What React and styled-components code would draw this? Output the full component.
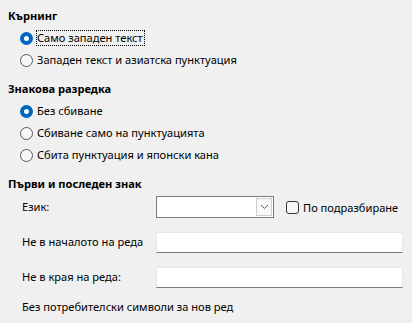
import React from "react";
import styled, { createGlobalStyle } from "styled-components";

const GlobalStyle = createGlobalStyle`
  html, body {
    margin: 0;
    padding: 0;
    background: #f0f0f0;
  }
  body {
    font-family: "Noto Sans", "Liberation Sans", sans-serif;
    font-size: 11.1px;
    color: #000;
  }
`;

const Page = styled.div`
  width: 412px;
  height: 323px;
  box-sizing: border-box;
  padding: 7px 0 0 8px;
  display: flex;
  flex-direction: column;
  gap: 9px;
  overflow: hidden;
`;

const Section = styled.section`
  display: flex;
  flex-direction: column;
`;

const Heading = styled.h3`
  margin: 0;
  font-size: 11.1px;
  font-weight: bold;
  line-height: 18px;
`;

const RadioList = styled.div`
  margin-top: 2px;
  padding-left: 12px;
  display: flex;
  flex-direction: column;
`;

const RadioRow = styled.label`
  height: 22px;
  display: flex;
  align-items: center;
  gap: 3px;
`;

const RadioDot = styled.span`
  width: 13px;
  height: 13px;
  box-sizing: border-box;
  border-radius: 50%;
  flex-shrink: 0;
  background: ${(p) => (p.$on ? "#ffffff" : "#f7f7f7")};
  border: ${(p) => (p.$on ? "4px solid #0067c0" : "1px solid #5a5a5a")};
`;

const RadioText = styled.span`
  line-height: 14px;
  padding: 0 1px 0 0;
  border: 1px dotted ${(p) => (p.$focus ? "#000" : "transparent")};
  white-space: nowrap;
`;

const FormGrid = styled.div`
  margin-top: 3px;
  padding-left: 14px;
  display: grid;
  grid-template-columns: 134px 247px;
  grid-template-rows: 22px 22px 22px 12px;
  row-gap: 13px;
  align-items: center;
`;

const FieldLabel = styled.span`
  line-height: 16px;
  white-space: nowrap;
`;

const LangRow = styled.div`
  display: flex;
  align-items: center;
  gap: 12px;
`;

const Combo = styled.div`
  width: 118px;
  height: 22px;
  box-sizing: border-box;
  border: 1px solid #7a7a7a;
  background: #fff;
  display: flex;
  justify-content: flex-end;
  padding: 1px;
`;

const ComboButton = styled.span`
  width: 16px;
  box-sizing: border-box;
  border: 1px solid #cfcfcf;
  background: #fafafa;
  display: flex;
  align-items: center;
  justify-content: center;
`;

const CheckRow = styled.label`
  display: flex;
  align-items: center;
  gap: 4px;
  white-space: nowrap;
`;

const CheckBox = styled.span`
  width: 13px;
  height: 13px;
  flex-shrink: 0;
  box-sizing: border-box;
  border: 1px solid #333;
  border-radius: 3px;
  background: #f7f7f7;
`;

const TextInput = styled.div`
  height: 21px;
  box-sizing: border-box;
  background: #fff;
  border: 1px solid #e6e6e6;
  border-bottom: 1px solid #7a7a7a;
`;

const Note = styled.p`
  margin: 0;
  line-height: 16px;
  grid-column: 1 / -1;
  white-space: nowrap;
`;

const Chevron = () => (
  <svg width="9" height="6" viewBox="0 0 9 6">
    <path d="M1 1 L4.5 4.5 L8 1" fill="none" stroke="#606060" strokeWidth="1" />
  </svg>
);

const Radio = ({ on, focus, children }) => (
  <RadioRow>
    <RadioDot $on={on} />
    <RadioText $focus={focus}>{children}</RadioText>
  </RadioRow>
);

export default function App() {
  return (
    <>
      <GlobalStyle />
      <Page>
        <Section>
          <Heading>Кърнинг</Heading>
          <RadioList>
            <Radio on focus>Само западен текст</Radio>
            <Radio>Западен текст и азиатска пунктуация</Radio>
          </RadioList>
        </Section>
        <Section>
          <Heading>Знакова разредка</Heading>
          <RadioList>
            <Radio on>Без сбиване</Radio>
            <Radio>Сбиване само на пунктуацията</Radio>
            <Radio>Сбита пунктуация и японски кана</Radio>
          </RadioList>
        </Section>
        <Section>
          <Heading>Първи и последен знак</Heading>
          <FormGrid>
            <FieldLabel>Език:</FieldLabel>
            <LangRow>
              <Combo>
                <ComboButton>
                  <Chevron />
                </ComboButton>
              </Combo>
              <CheckRow>
                <CheckBox />
                По подразбиране
              </CheckRow>
            </LangRow>
            <FieldLabel>Не в началото на реда</FieldLabel>
            <TextInput />
            <FieldLabel>Не в края на реда:</FieldLabel>
            <TextInput />
            <Note>Без потребителски символи за нов ред</Note>
          </FormGrid>
        </Section>
      </Page>
    </>
  );
}
